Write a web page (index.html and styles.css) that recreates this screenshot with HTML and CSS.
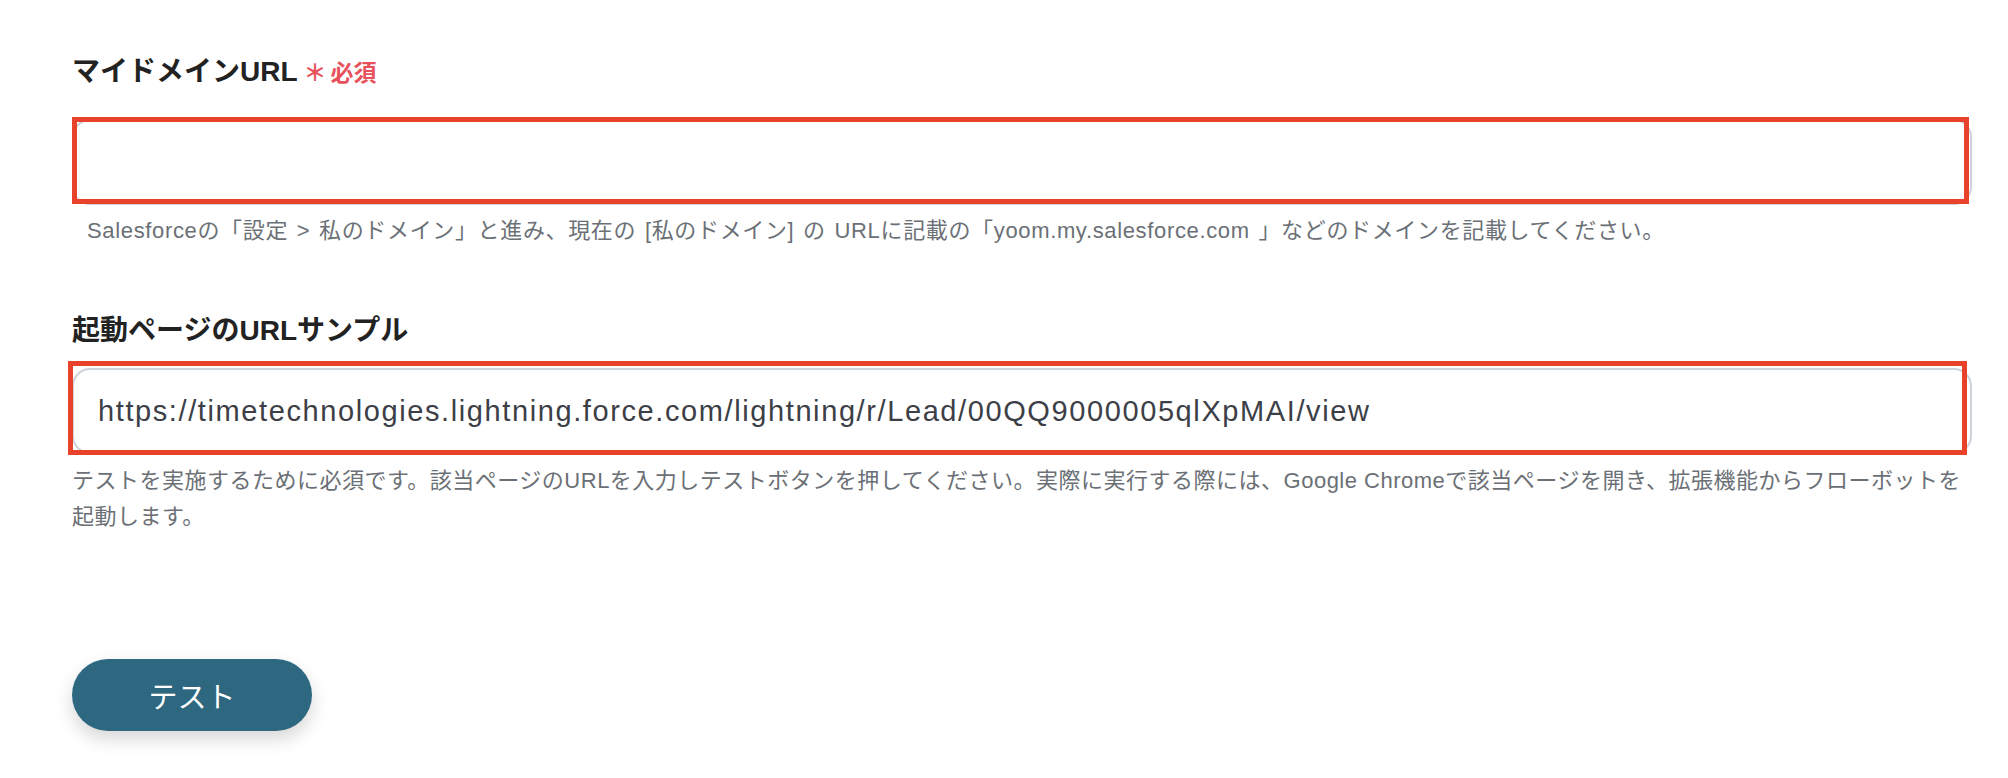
FILE: index.html
```html
<!DOCTYPE html>
<html lang="ja">
<head>
  <meta charset="UTF-8" />
  <meta name="viewport" content="width=device-width, initial-scale=1.0" />
  <title>フローボット設定</title>
  <link rel="stylesheet" href="styles.css">
</head>
<body>
  <div class="container">
    <div class="field">
      <label class="label" for="domain">マイドメインURL<span class="required"><span class="star">＊</span>必須</span></label>
      <div class="input-wrap">
        <input type="text" id="domain" class="input" />
        <div class="mark mark-domain"></div>
      </div>
      <p class="help help-indent">Salesforceの「設定 &gt; 私のドメイン」と進み、現在の [私のドメイン] の URLに記載の「yoom.my.salesforce.com 」などのドメインを記載してください。</p>
    </div>

    <div class="field field-second">
      <label class="label" for="sample">起動ページのURLサンプル</label>
      <div class="input-wrap input-wrap-second">
        <input type="text" id="sample" class="input" value="https://timetechnologies.lightning.force.com/lightning/r/Lead/00QQ9000005qlXpMAI/view" />
        <div class="mark mark-sample"></div>
      </div>
      <p class="help help-second">テストを実施するために必須です。該当ページのURLを入力しテストボタンを押してください。実際に実行する際には、Google Chromeで該当ページを開き、拡張機能からフローボットを起動します。</p>
    </div>

    <button class="btn">テスト</button>
  </div>
</body>
</html>
```

FILE: styles.css
```css
:root {
  --text: #222222;
  --muted: #6b7076;
  --border: #cdd3d9;
  --mark: #e8432a;
  --required: #e8505b;
  --primary: #2e6780;
}

* {
  box-sizing: border-box;
}

body {
  margin: 0;
  background: #ffffff;
  font-family: 'Liberation Sans', 'Noto Sans CJK JP', sans-serif;
  color: var(--text);
}

.container {
  width: 1972px;
  padding: 52px 0 40px 72px;
}

.label {
  display: block;
  font-size: 28px;
  line-height: 40px;
  font-weight: bold;
  color: var(--text);
}

.required {
  margin-left: 6px;
  font-size: 23px;
  color: var(--required);
}

.star {
  margin-right: 4px;
}

.input-wrap {
  position: relative;
  margin-top: 26px;
}

.input-wrap-second {
  margin-top: 17px;
}

.input {
  display: block;
  width: 100%;
  height: 86px;
  padding: 0 24px;
  border: 2px solid var(--border);
  border-radius: 18px;
  background: #fff;
  font-family: inherit;
  font-size: 29px;
  letter-spacing: 1.6px;
  color: #3c4046;
  outline: none;
}

/* red highlight boxes drawn on top of the screenshot */
.mark {
  position: absolute;
  border: 5px solid var(--mark);
  pointer-events: none;
}

.mark-domain {
  top: -2px;
  left: 0;
  right: 3px;
  bottom: 1px;
}

.mark-sample {
  top: -7px;
  left: -4px;
  right: 5px;
  bottom: -1px;
}

.help {
  margin: 8px 0 0;
  font-size: 22px;
  line-height: 36px;
  letter-spacing: 0.5px;
  color: var(--muted);
}

.help-indent {
  padding-left: 15px;
  letter-spacing: 0.65px;
  word-spacing: 2px;
}

.field-second {
  margin-top: 62px;
}

.help-second {
  margin-top: 9px;
}

.btn {
  display: block;
  margin-top: 124px;
  width: 240px;
  height: 72px;
  border: none;
  border-radius: 36px;
  background: var(--primary);
  color: #fff;
  font-family: inherit;
  font-size: 29px;
  box-shadow: 0 8px 18px rgba(0, 0, 0, 0.16);
  cursor: pointer;
}
```
